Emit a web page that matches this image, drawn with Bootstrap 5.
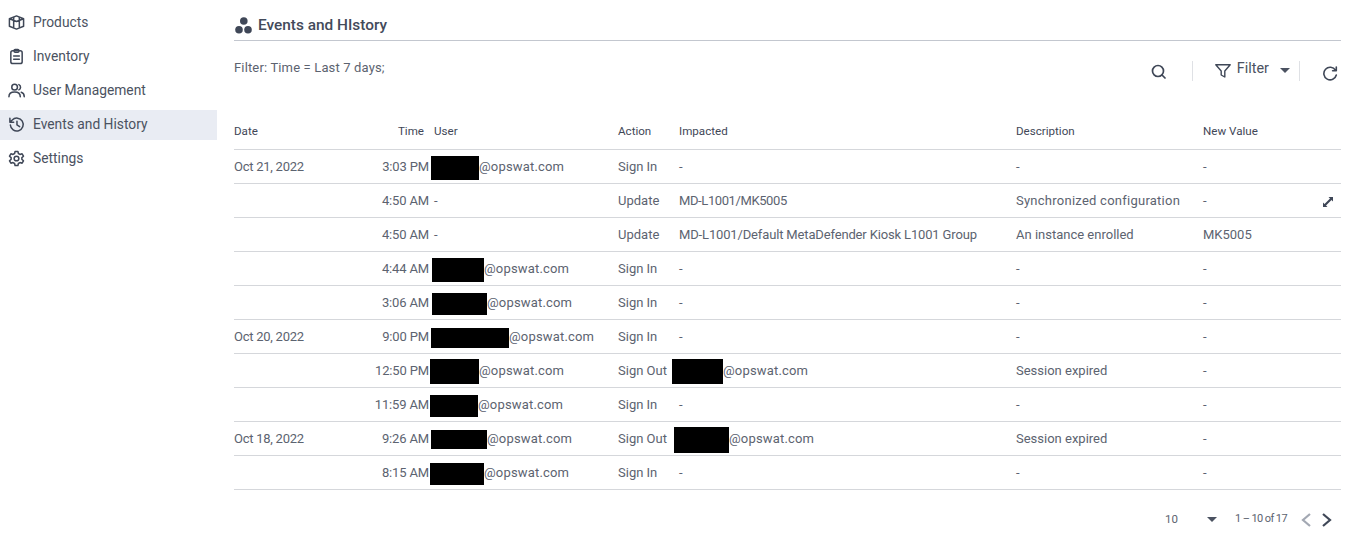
<!DOCTYPE html>
<html lang="en">
<head>
<meta charset="utf-8">
<title>Events and History</title>
<link href="https://cdn.jsdelivr.net/npm/bootstrap@5.3.0/dist/css/bootstrap.min.css" rel="stylesheet">
<style>
html,body{height:544px;overflow:hidden}
body{font-family:Roboto,"Liberation Sans",sans-serif;color:#4b5261;font-size:14px;background:#fff}
.app-side{width:217px;flex:none;padding-top:5px}
.side-link{height:34px;padding-left:8px;color:#4b5261;gap:8px;text-decoration:none;font-size:13.8px}
.side-link svg{width:17px;height:17px;flex:none;stroke:#3f4757;fill:none;stroke-width:1.6;stroke-linecap:round;stroke-linejoin:round}
.side-active{background:#e9ecf3;height:30px;margin:3px 0 1px;padding-bottom:2px}
.app-main{width:1107px;margin-left:17px;flex:none}
.page-head{height:41px;border-bottom:1px solid #c3c7cf;padding-top:10px;gap:5px}
.page-head h1{font-size:15.4px;font-weight:500;margin:0;color:#434a5a}
.tool-row{height:68px;padding-top:13px}
.tool-txt{font-size:13px;color:#5c6370;letter-spacing:.15px}
.tool-bar{padding-top:4px;padding-right:3px;color:#4b5261}
.tool-sep{width:1px;height:20px;background:#dfe1e5}
.gap-search{margin-left:26px;margin-right:22px}
.ico-search{margin-top:2px}
.filter-lbl{margin-left:6px;margin-right:11px;font-size:14.4px;padding-bottom:4px}
.gap-caret{margin-left:9px;margin-right:22px}
.ev-table{table-layout:fixed;width:1107px;margin:0}
.ev-table th{font-size:11.6px;font-weight:400;color:#3f4757;height:40px;padding:6px 0 0;vertical-align:middle;border-bottom:1px solid #d5d7db}
.ev-table td{height:34px;padding:2px 0 0;vertical-align:middle;font-size:13px;color:#5c6370;border-bottom:1px solid #d5d7db;white-space:nowrap;position:relative}
.ev-table td.t-date{letter-spacing:-.25px}
.ev-table td.t-time{text-align:right;padding-right:5px;letter-spacing:-.15px}
.ev-table th.t-time{text-align:right;padding-right:10px}
.ev-table td.t-tight{letter-spacing:-.15px}
.ev-table td.t-tighter{letter-spacing:-.4px}
.ev-table td.t-wide{letter-spacing:.25px}
.ev-table td.t-mail{letter-spacing:.17px}
.blackout{display:inline-block;background:#000;vertical-align:middle;margin-top:-7px;margin-bottom:-7px}
.expand-ico{position:absolute;right:8px;top:13px;width:10px;height:10px}
.pager{height:54px;font-size:11px;color:#5c6370;padding-top:6px;padding-right:9px}
.pg-size{width:42px;font-size:11.5px}
.pg-range{margin-left:18px;margin-right:14px;letter-spacing:-.6px}
.pg-prev{margin-right:11px}
.pg-caret{width:0;height:0;border-left:5px solid transparent;border-right:5px solid transparent;border-top:5px solid #4b5261}
</style>
</head>
<body>
<div class="d-flex">
  <nav class="app-side d-flex flex-column">
    <a class="side-link d-flex align-items-center" href="#"><svg viewBox="0 0 18 18"><path d="M1.500 5 9 2l7.500 3v8L9 16l-7.500-3zM1.500 5 9 8l7.500-3M6 3.500v11M12 3.500v11"/></svg>Products</a>
    <a class="side-link d-flex align-items-center" href="#"><svg viewBox="0 0 18 18"><rect x="3" y="3" width="12" height="13.500" rx="2"/><rect x="6.500" y="1.500" width="5" height="3" rx="1"/><path d="M6 8.500h6M6 12h6"/></svg>Inventory</a>
    <a class="side-link d-flex align-items-center" href="#"><svg viewBox="0 0 18 18"><circle cx="7" cy="5.500" r="3"/><path d="M1 15.500c0-3.500 2.500-5 6-5s6 1.500 6 5M11.500 2.800a3 3 0 0 1 0 5.500M14 10.800c2 .6 3.200 2.200 3.200 4.700"/></svg>User Management</a>
    <a class="side-link side-active d-flex align-items-center" href="#"><svg viewBox="0 0 18 18"><path d="M2.500 9.500a6.800 6.800 0 1 0 2-5.300L2 6.500M2 2.500v4h4M9.500 5.500V9.500l2.800 1.800"/></svg>Events and History</a>
    <a class="side-link d-flex align-items-center" href="#"><svg viewBox="0 0 18 18"><circle cx="9" cy="9" r="2.500"/><path d="M7.500 1.500h3l.5 2.200 1.700 1 2.200-.7 1.500 2.600-1.700 1.500v1.800l1.700 1.500-1.500 2.600-2.200-.7-1.700 1-.5 2.200h-3l-.5-2.200-1.700-1-2.200.7-1.500-2.600 1.700-1.500V8.100L1.600 6.600l1.500-2.600 2.200.7 1.700-1z"/></svg>Settings</a>
  </nav>
  <main class="app-main">
    <div class="page-head d-flex align-items-center">
      <svg width="19" height="17" viewBox="0 0 19 17" fill="#3f4757"><circle cx="9.800" cy="4" r="3.800"/><circle cx="5" cy="12.800" r="3.800"/><circle cx="14" cy="12.800" r="3.800"/></svg>
      <h1>Events and HIstory</h1>
    </div>
    <div class="tool-row d-flex align-items-start justify-content-between">
      <span class="tool-txt mt-1">Filter: Time = Last 7 days;</span>
      <div class="tool-bar d-flex align-items-center">
        <svg class="ico-search" width="15" height="15" viewBox="0 0 15 15" fill="none" stroke="#3f4757" stroke-width="1.700" stroke-linecap="round"><circle cx="7" cy="7" r="5.500"/><path d="m11 11 3 3"/></svg>
        <span class="tool-sep gap-search"></span>
        <svg width="16" height="14" viewBox="0 0 16 14" fill="none" stroke="#3f4757" stroke-width="1.400" stroke-linejoin="round"><path d="M.8.800h14.400L9.800 7v6L6.200 11V7z"/></svg>
        <span class="filter-lbl">Filter</span>
        <span class="pg-caret"></span>
        <span class="tool-sep gap-caret"></span>
        <svg width="16" height="16" viewBox="0 0 16 16" fill="none" stroke="#3f4757" stroke-width="1.600" stroke-linecap="round" stroke-linejoin="round" class="mt-1"><path d="M13.500 5.200A6.300 6.300 0 1 0 14.300 10M14.300 2v3.700h-3.700"/></svg>
      </div>
    </div>
    <table class="table ev-table">
      <colgroup><col style="width:100px"><col style="width:100px"><col style="width:184px"><col style="width:61px"><col style="width:337px"><col style="width:187px"><col></colgroup>
      <thead><tr><th>Date</th><th class="t-time">Time</th><th>User</th><th>Action</th><th>Impacted</th><th>Description</th><th>New Value</th></tr></thead>
      <tbody>
      <tr><td class="t-date">Oct 21, 2022</td><td class="t-time">3:03 PM</td><td class="t-mail"><span class="blackout" style="width:48px;height:24px;margin-left:-3px"></span>@opswat.com</td><td>Sign In</td><td>-</td><td>-</td><td>-</td></tr>
      <tr><td></td><td class="t-time">4:50 AM</td><td>-</td><td>Update</td><td class="t-tighter">MD-L1001/MK5005</td><td class="t-wide">Synchronized configuration</td><td>-<svg class="expand-ico" viewBox="0 0 10 10" fill="#3f4757"><path d="M5.500 0H10v4.500L8.500 3 3 8.500 4.500 10H0V5.500L1.500 7 7 1.500z"/></svg></td></tr>
      <tr><td></td><td class="t-time">4:50 AM</td><td>-</td><td>Update</td><td class="t-tight">MD-L1001/Default MetaDefender Kiosk L1001 Group</td><td>An instance enrolled</td><td>MK5005</td></tr>
      <tr><td></td><td class="t-time">4:44 AM</td><td class="t-mail"><span class="blackout" style="width:52px;height:24px;margin-left:-2px"></span>@opswat.com</td><td>Sign In</td><td>-</td><td>-</td><td>-</td></tr>
      <tr><td></td><td class="t-time">3:06 AM</td><td class="t-mail"><span class="blackout" style="width:55px;height:22px;margin-left:-2px"></span>@opswat.com</td><td>Sign In</td><td>-</td><td>-</td><td>-</td></tr>
      <tr><td class="t-date">Oct 20, 2022</td><td class="t-time">9:00 PM</td><td class="t-mail"><span class="blackout" style="width:78px;height:20px;margin-left:-3px"></span>@opswat.com</td><td>Sign In</td><td>-</td><td>-</td><td>-</td></tr>
      <tr><td></td><td class="t-time">12:50 PM</td><td class="t-mail"><span class="blackout" style="width:49px;height:25px;margin-left:-4px"></span>@opswat.com</td><td>Sign Out</td><td class="t-mail"><span class="blackout" style="width:51px;height:25px;margin-left:-7px"></span>@opswat.com</td><td>Session expired</td><td>-</td></tr>
      <tr><td></td><td class="t-time">11:59 AM</td><td class="t-mail"><span class="blackout" style="width:48px;height:22px;margin-left:-4px"></span>@opswat.com</td><td>Sign In</td><td>-</td><td>-</td><td>-</td></tr>
      <tr><td class="t-date">Oct 18, 2022</td><td class="t-time">9:26 AM</td><td class="t-mail"><span class="blackout" style="width:56px;height:19px;margin-left:-3px"></span>@opswat.com</td><td>Sign Out</td><td class="t-mail"><span class="blackout" style="width:55px;height:26px;margin-left:-5px"></span>@opswat.com</td><td>Session expired</td><td>-</td></tr>
      <tr><td></td><td class="t-time">8:15 AM</td><td class="t-mail"><span class="blackout" style="width:54px;height:22px;margin-left:-4px"></span>@opswat.com</td><td>Sign In</td><td>-</td><td>-</td><td>-</td></tr>
      </tbody>
    </table>
    <div class="pager d-flex align-items-center justify-content-end">
      <span class="pg-size">10</span>
      <span class="pg-caret"></span>
      <span class="pg-range">1 – 10 of 17</span>
      <svg class="pg-prev" width="10" height="14" viewBox="0 0 10 14" fill="none" stroke="#a3a8b3" stroke-width="2.200"><path d="M9 1 2 7l7 6"/></svg>
      <svg width="10" height="14" viewBox="0 0 10 14" fill="none" stroke="#3f4757" stroke-width="2.200"><path d="m1 1 7 6-7 6"/></svg>
    </div>
  </main>
</div>
<script src="https://cdn.jsdelivr.net/npm/bootstrap@5.3.0/dist/js/bootstrap.bundle.min.js"></script>
</body>
</html>
